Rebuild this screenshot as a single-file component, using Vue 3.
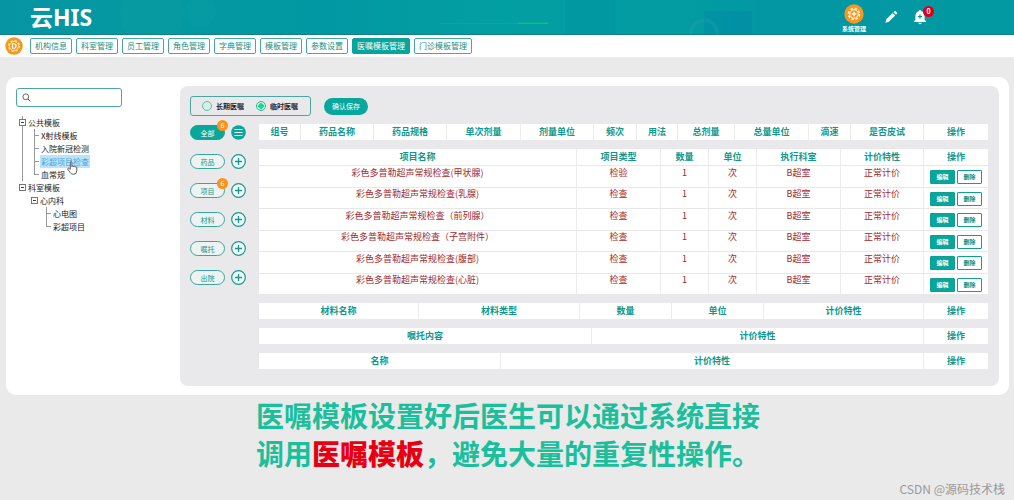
<script setup>
import { ref } from 'vue'

const navItems = ['机构信息', '科室管理', '员工管理', '角色管理', '字典管理', '模板管理', '参数设置', '医嘱模板管理', '门诊模板管理']
const activeNav = ref('医嘱模板管理')

const tree = [
  {
    label: '公共模板',
    children: [{ label: 'X射线模板' }, { label: '入院新冠检测' }, { label: '彩超项目检查' }, { label: '血常规' }]
  },
  {
    label: '科室模板',
    children: [{ label: '心内科', children: [{ label: '心电图' }, { label: '彩超项目' }] }]
  }
]
const selected = ref('彩超项目检查')
const keyword = ref('')
const term = ref('temporary')

const categories = [
  { label: '全部', count: 6 },
  { label: '药品' },
  { label: '项目', count: 6 },
  { label: '材料' },
  { label: '嘱托' },
  { label: '出院' }
]

const col = (label, w) => ({ label, w })
const tables = [
  {
    name: 'drug',
    cols: [col('组号', 42), col('药品名称', 73), col('药品规格', 73), col('单次剂量', 74), col('剂量单位', 73), col('频次', 43), col('用法', 41), col('总剂量', 57), col('总量单位', 74), col('滴速', 42), col('是否皮试', 73), col('操作', 64)],
    rows: []
  },
  {
    name: 'item',
    cols: [col('项目名称', 318), col('项目类型', 84), col('数量', 48), col('单位', 48), col('执行科室', 84), col('计价特性', 83), col('操作', 64)],
    rows: [
      ['彩色多普勒超声常规检查(甲状腺)', '检验', '1', '次', 'B超室', '正常计价'],
      ['彩色多普勒超声常规检查(乳腺)', '检查', '1', '次', 'B超室', '正常计价'],
      ['彩色多普勒超声常规检查（前列腺）', '检查', '1', '次', 'B超室', '正常计价'],
      ['彩色多普勒超声常规检查（子宫附件）', '检查', '1', '次', 'B超室', '正常计价'],
      ['彩色多普勒超声常规检查(腹部)', '检查', '1', '次', 'B超室', '正常计价'],
      ['彩色多普勒超声常规检查(心脏)', '检查', '1', '次', 'B超室', '正常计价']
    ]
  },
  {
    name: 'material',
    cols: [col('材料名称', 160), col('材料类型', 161), col('数量', 92), col('单位', 92), col('计价特性', 160), col('操作', 64)],
    rows: []
  },
  { name: 'advice', cols: [col('嘱托内容', 333), col('计价特性', 332), col('操作', 64)], rows: [] },
  { name: 'discharge', cols: [col('名称', 242), col('计价特性', 423), col('操作', 64)], rows: [] }
]
const total = (cols) => cols.reduce((sum, c) => sum + c.w, 0)
</script>

<template>
  <div class="page">
    <header class="topbar">
      <svg class="topbar-art" viewBox="0 0 1014 35" preserveAspectRatio="none" aria-hidden="true">
        <circle cx="152" cy="16" r="32" fill="#12a3a0" opacity=".2" />
        <circle cx="200" cy="12" r="16" fill="#12a8a6" opacity=".15" />
        <rect x="565" width="50" height="35" fill="#0090a0" opacity=".3" />
        <rect x="704" y="12" width="48" height="23" fill="#008aa6" opacity=".5" />
        <circle cx="704" cy="34" r="13" fill="none" stroke="#2fa9ae" stroke-width="4" opacity=".25" />
        <path d="M440 24H548" stroke="#16b694" stroke-width="1" opacity=".4" />
        <path d="M518 24H548" stroke="#12c07a" stroke-width="1.5" />
      </svg>
      <h1 class="logo">云HIS</h1>
      <div class="tools">
        <a class="system" href="#">
          <svg class="gear" viewBox="0 0 20 20" aria-hidden="true">
            <circle cx="10" cy="10" r="9.7" fill="#f7981d" />
            <circle cx="10" cy="10" r="5.4" fill="none" stroke="#fff3d9" stroke-width="1.8" stroke-dasharray="2.4 1.84" />
            <circle cx="10" cy="10" r="4.2" fill="none" stroke="#fff3d9" stroke-width="1" />
            <path d="M10 7.7v4.6M7.7 10h4.6" stroke="#fff" stroke-width="1.4" />
          </svg>
          <span>系统管理</span>
        </a>
        <button class="tool" type="button" aria-label="编辑">
          <svg width="14" height="14" viewBox="0 0 14 14" aria-hidden="true">
            <path d="M1.4 12.7 2.3 9.2 8.6 3l2.6 2.5-6.3 6.3zM9.4 2.2l.9-.9q.7-.6 1.4 0l1.2 1.2q.6.7 0 1.3l-.9 1z" fill="#fff" />
          </svg>
        </button>
        <button class="tool bell" type="button" aria-label="通知">
          <svg width="14" height="16" viewBox="0 0 14 16" aria-hidden="true">
            <path d="M7 1q1 0 1.1 1.2Q11.600 3 11.600 7v3.600l1.300 1.600v.8H1.100v-.8l1.300-1.600V7q0-4 3.500-4.800Q6 1 7 1zM5.400 13.700h3.200Q8.400 15.200 7 15.200T5.400 13.700z" fill="#fff" />
            <path d="M7 5.400v4.400M4.800 7.600h4.400" stroke="#0a9a9e" stroke-width="1.200" />
          </svg>
          <span class="alert">0</span>
        </button>
      </div>
    </header>

    <nav class="nav">
      <svg class="nav-gear" viewBox="0 0 20 20" aria-hidden="true">
        <circle cx="10" cy="10" r="9.700" fill="#f39a1e" />
        <circle cx="10" cy="10" r="6" fill="none" stroke="#fff0d0" stroke-width="1.200" stroke-dasharray="2.700 2" />
        <circle cx="10" cy="10" r="5" fill="none" stroke="#fff0d0" stroke-width=".8" />
        <path d="M8.300 7.500h1.500q2.500.3 2.500 2.500t-2.500 2.500H8.300z" fill="none" stroke="#fff" stroke-width="1.300" />
      </svg>
      <button v-for="n in navItems" :key="n" type="button" class="nav-btn" :class="{ active: n === activeNav }" @click="activeNav = n">{{ n }}</button>
    </nav>

    <main class="card">
      <aside class="side">
        <label class="search">
          <svg width="9" height="9" viewBox="0 0 9 9" aria-hidden="true">
            <circle cx="3.800" cy="3.800" r="2.900" fill="none" stroke="#555" stroke-width=".9" />
            <path d="M6 6l2.300 2.300" stroke="#555" stroke-width="1" />
          </svg>
          <input v-model="keyword" type="text" aria-label="搜索模板" />
        </label>
        <ul class="tree">
          <li v-for="root in tree" :key="root.label" class="root">
            <div class="node"><button class="toggle" type="button" :aria-label="'折叠' + root.label"></button>{{ root.label }}</div>
            <ul>
              <li v-for="kid in root.children" :key="kid.label" :class="kid.children ? 'branch' : 'leaf'">
                <template v-if="kid.children">
                  <div class="node"><button class="toggle" type="button" :aria-label="'折叠' + kid.label"></button>{{ kid.label }}</div>
                  <ul>
                    <li v-for="g in kid.children" :key="g.label" class="leaf"><a href="#" @click.prevent="selected = g.label">{{ g.label }}</a></li>
                  </ul>
                </template>
                <template v-else>
                  <a href="#" :class="{ picked: kid.label === selected }" @click.prevent="selected = kid.label">{{ kid.label }}</a>
                  <svg v-if="kid.label === selected" class="hand" width="11" height="14" viewBox="0 0 11 14" aria-hidden="true">
                    <path d="M3.300 8.200V1.600q0-1 .8-1t.8 1v4q.1-.7.8-.7t.8.9q.1-.6.8-.6t.8.9q.1-.4.8-.4t.9 1v3q0 3.600-3.400 3.600-2.400 0-3.400-2L.8 8.300q-.3-.9.400-1.100.7-.1 1.200.6z" fill="#fff" stroke="#333" stroke-width=".8" stroke-linejoin="round" />
                  </svg>
                </template>
              </li>
            </ul>
          </li>
        </ul>
      </aside>

      <section class="panel">
        <form class="controls" @submit.prevent>
          <div class="terms">
            <label><input v-model="term" type="radio" name="term" value="long" />长期医嘱</label>
            <label><input v-model="term" type="radio" name="term" value="temporary" />临时医嘱</label>
          </div>
          <button class="save" type="submit">确认保存</button>
        </form>
        <div class="body">
          <div class="cats">
            <div v-for="(c, i) in categories" :key="c.label" class="cat">
              <button class="pill" :class="{ full: i === 0 }" type="button">{{ c.label }}<span v-if="c.count" class="count">{{ c.count }}</span></button>
              <button class="round" type="button" :aria-label="i ? '添加' + c.label : '列表'">
                <svg width="15" height="15" viewBox="0 0 15 15" aria-hidden="true">
                  <template v-if="i === 0">
                    <circle cx="7.500" cy="7.500" r="7.300" fill="#0aa79c" />
                    <path d="M3.500 4.500h8M3.500 7.500h8M3.500 10.500h8" stroke="#fff" stroke-width="1.100" />
                  </template>
                  <template v-else>
                    <circle cx="7.500" cy="7.500" r="6.800" fill="#f1f8f7" stroke="#159a8e" stroke-width="1.200" />
                    <path d="M7.500 4v7M4 7.500h7" stroke="#159a8e" stroke-width="1.300" />
                  </template>
                </svg>
              </button>
            </div>
          </div>
          <div class="tables">
            <table v-for="t in tables" :key="t.name">
              <colgroup><col v-for="(c, i) in t.cols" :key="i" :style="{ width: (c.w / total(t.cols)) * 100 + '%' }" /></colgroup>
              <thead><tr><th v-for="c in t.cols" :key="c.label" scope="col">{{ c.label }}</th></tr></thead>
              <tbody v-if="t.rows.length">
                <tr v-for="r in t.rows" :key="r[0]">
                  <td v-for="(v, i) in r" :key="i">{{ v }}</td>
                  <td class="ops"><div><button class="edit" type="button">编辑</button><button class="del" type="button">删除</button></div></td>
                </tr>
              </tbody>
            </table>
          </div>
        </div>
      </section>
    </main>

    <p class="caption">医嘱模板设置好后医生可以通过系统直接<br />调用<strong>医嘱模板</strong>，避免大量的重复性操作。</p>
    <footer class="mark">CSDN @源码技术栈</footer>
  </div>
</template>

<style>
body {
  margin: 0;
  background: #eaeaeb;
}
</style>

<style scoped>
.page {
  position: relative;
  min-height: 100vh;
  box-sizing: border-box;
  font-family: "Noto Sans CJK SC", "Noto Sans", sans-serif;
  font-size: 8px;
  color: #222;
  overflow: hidden;
}
.page * {
  box-sizing: border-box;
}
button,
input {
  font: inherit;
  margin: 0;
  padding: 0;
}
button {
  cursor: pointer;
}
svg {
  display: block;
}
ul {
  list-style: none;
  margin: 0;
  padding: 0;
}
a {
  color: inherit;
  text-decoration: none;
}
.topbar {
  position: relative;
  height: 35px;
  display: flex;
  align-items: center;
  justify-content: space-between;
  padding: 0 87px 0 30px;
  background: linear-gradient(90deg, #0795a4, #0499a1 15%, #0298a3 32%, #029fa2 50%, #029ba2 70%, #0396a3 76%, #0299a2);
  border-bottom: 1px solid #147f88;
}
.topbar-art {
  position: absolute;
  inset: 0;
  width: 100%;
  height: 100%;
}
.logo {
  position: relative;
  margin: 0;
  font: bold 23px/32px "Noto Sans", "Noto Sans CJK SC", sans-serif;
  color: #fff;
}
.tools {
  position: relative;
  display: flex;
  align-items: center;
  gap: 15px;
  color: #fff;
}
.system {
  display: flex;
  flex-direction: column;
  align-items: center;
  margin-right: 3px;
  padding-top: 2px;
  font-size: 6px;
  line-height: 8px;
  font-weight: bold;
  gap: 1px;
}
.gear {
  width: 20px;
  height: 20px;
}
.tool {
  position: relative;
  border: 0;
  background: none;
}
.alert {
  position: absolute;
  left: 10px;
  top: -3px;
  width: 11px;
  height: 11px;
  border-radius: 50%;
  background: #d9001b;
  color: #fff;
  font-size: 7px;
  line-height: 11px;
  font-weight: bold;
}
.nav {
  min-height: 22px;
  display: flex;
  align-items: center;
  gap: 4px;
  padding: 0 5px;
  background: #fff;
}
.nav-gear {
  width: 18px;
  height: 18px;
  margin-right: 3px;
}
.nav-btn {
  height: 16px;
  padding: 0 4px;
  border: 1px solid #4aa79f;
  border-radius: 2px;
  background: #fff;
  color: #168f86;
  line-height: 14px;
}
.nav-btn.active {
  background: #08a59b;
  border-color: #08a59b;
  color: #fff;
}
.card {
  display: flex;
  margin: 20px 5px 0 6px;
  padding: 9px 10px;
  border-radius: 10px;
  background: #fff;
}
.side {
  flex: 0 0 164px;
  padding-top: 2px;
}
.search {
  display: flex;
  align-items: center;
  width: 106px;
  height: 19px;
  padding: 0 5px;
  gap: 3px;
  border: 1px solid #4ba69f;
  border-radius: 3px;
}
.search input {
  flex: 1;
  min-width: 0;
  border: 0;
  outline: 0;
  background: none;
}
.tree {
  margin: 9px 0 0 3px;
  line-height: 13px;
  color: #222;
}
.tree li {
  position: relative;
}
.tree ul {
  margin-left: 12px;
}
.node {
  display: flex;
  align-items: center;
  gap: 2px;
}
.toggle {
  position: relative;
  width: 7px;
  height: 7px;
  border: 1px solid #777;
  background: #fff;
}
.toggle::after {
  content: "";
  position: absolute;
  left: 1px;
  top: 2px;
  width: 3px;
  height: 1px;
  background: #444;
}
.leaf {
  padding-left: 9px;
}
.leaf::before,
.root:first-child::before {
  content: "";
  position: absolute;
  left: 3px;
  top: 0;
  bottom: 0;
  border-left: 1px solid #999;
}
.leaf:last-child::before {
  bottom: 6px;
}
.leaf::after {
  content: "";
  position: absolute;
  left: 4px;
  top: 6px;
  width: 4px;
  border-top: 1px solid #999;
}
.leaf a {
  display: inline-block;
  vertical-align: top;
  padding: 0 1px;
}
.leaf .picked {
  background: #bde3fb;
  color: #4aa3dc;
}
.hand {
  position: absolute;
  left: 36px;
  top: 6px;
  z-index: 1;
}
.panel {
  flex: 1;
  min-width: 0;
  padding: 10px 11px 17px 10px;
  border-radius: 8px;
  background: #e9e9eb;
}
.controls {
  display: flex;
  align-items: center;
  gap: 13px;
}
.terms {
  display: flex;
  gap: 12px;
  padding: 0 12px 0 11px;
  border: 1px solid #4ba69f;
  border-radius: 3px;
}
.terms label {
  display: flex;
  align-items: center;
  gap: 4px;
  height: 18px;
  font-size: 7px;
  font-weight: bold;
  color: #1c1c33;
}
.terms input {
  appearance: none;
  width: 10px;
  height: 10px;
  border: 1px solid #5fc0a5;
  border-radius: 50%;
  background: #d5f0e6;
}
.terms input:checked {
  border-color: #1fbf8d;
  background: radial-gradient(circle at center, #14db91 45%, #d5f6e8 52%);
}
.save {
  width: 44px;
  height: 17px;
  border: 0;
  border-radius: 9px;
  background: #08a79c;
  color: #fff;
  font-size: 7px;
  line-height: 17px;
}
.body {
  display: flex;
  align-items: flex-start;
  gap: 13px;
  margin-top: 8px;
}
.cats {
  display: grid;
  gap: 14px;
  padding-top: 1px;
}
.cat {
  display: flex;
  align-items: center;
  gap: 6px;
}
.pill {
  position: relative;
  width: 35px;
  height: 15px;
  padding-top: 2px;
  border: 1px solid #38a69b;
  border-radius: 8px;
  background: #edf3f3;
  color: #14988d;
  font-size: 7px;
  line-height: 11px;
}
.pill.full {
  background: #08a79c;
  border-color: #08a79c;
  color: #fff;
}
.count {
  position: absolute;
  right: -4px;
  top: -6px;
  width: 11px;
  height: 11px;
  border-radius: 50%;
  background: #f7941d;
  color: #fff;
  line-height: 11px;
}
.round {
  border: 0;
  background: none;
}
.tables {
  flex: 1;
  min-width: 0;
  display: grid;
  gap: 9px;
}
table {
  width: 100%;
  table-layout: fixed;
  border-collapse: separate;
  border-spacing: 0;
  background: #fff;
  font-size: 9px;
  text-align: center;
}
th,
td {
  padding: 0;
  border-right: 1px solid #ececec;
  white-space: nowrap;
}
th:last-child,
td:last-child {
  border-right: 0;
}
th {
  height: 16px;
  line-height: 16px;
  font-weight: bold;
  color: #0f988d;
}
td {
  height: 22px;
  padding-bottom: 8px;
  border-top: 1px solid #e8e8e8;
  line-height: 12px;
  color: #a3292c;
}
tr:nth-child(even) td {
  height: 21px;
}
td.ops {
  padding: 1px 0 0;
}
.ops div {
  display: flex;
  justify-content: center;
  gap: 2px;
}
.ops button {
  width: 25px;
  height: 14px;
  border: 1px solid #0fa095;
  border-radius: 1px;
  font-size: 6px;
  line-height: 12px;
  font-weight: bold;
}
.ops .edit {
  background: #08a79c;
  color: #fff;
}
.ops .del {
  background: #fff;
  color: #0c8f85;
}
.caption {
  width: max-content;
  margin: 1px auto 0;
  padding-left: 2px;
  font-size: 28px;
  line-height: 38px;
  font-weight: bold;
  color: #1bbf9b;
}
.caption strong {
  color: #e60012;
}
.mark {
  position: absolute;
  right: 9px;
  bottom: 3px;
  font-size: 12px;
  line-height: 16px;
  color: #999;
}
</style>
